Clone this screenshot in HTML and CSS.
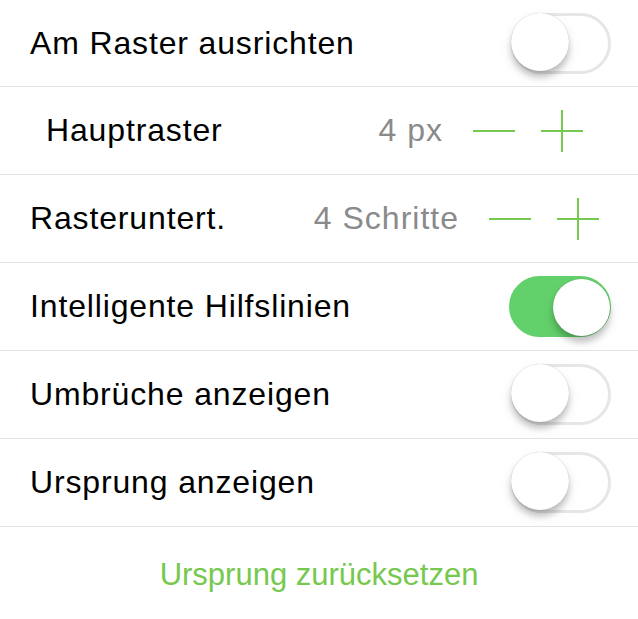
FILE: index.html
```html
<!DOCTYPE html>
<html lang="de">
<head>
<meta charset="utf-8">
<title>Raster</title>
<link rel="stylesheet" href="styles.css">
</head>
<body>
<div class="settings">
  <div class="row row-first">
    <span class="label">Am Raster ausrichten</span>
    <span class="switch"><span class="knob"></span></span>
  </div>
  <div class="row">
    <span class="label label-indent">Hauptraster</span>
    <div class="stepper stepper-wide">
      <span class="value">4 px</span>
      <span class="step minus"></span>
      <span class="step plus"></span>
    </div>
  </div>
  <div class="row">
    <span class="label">Rasteruntert.</span>
    <div class="stepper">
      <span class="value">4 Schritte</span>
      <span class="step minus"></span>
      <span class="step plus"></span>
    </div>
  </div>
  <div class="row">
    <span class="label">Intelligente Hilfslinien</span>
    <span class="switch on"><span class="knob"></span></span>
  </div>
  <div class="row">
    <span class="label">Umbrüche anzeigen</span>
    <span class="switch"><span class="knob"></span></span>
  </div>
  <div class="row">
    <span class="label">Ursprung anzeigen</span>
    <span class="switch"><span class="knob"></span></span>
  </div>
  <div class="action">Ursprung zurücksetzen</div>
</div>
</body>
</html>
```
FILE: styles.css
```css
html, body {
  margin: 0;
  padding: 0;
  background: #ffffff;
}

.settings {
  font-family: "Liberation Sans", Arial, sans-serif;
  font-size: 32px;
  color: #000000;
  display: flex;
  flex-direction: column;
}

.row {
  height: 87px;
  border-bottom: 1px solid #e3e3e3;
  display: flex;
  align-items: center;
  justify-content: space-between;
  padding: 0 27px 0 30px;
}

.row-first {
  height: 86px;
}

.label {
  letter-spacing: 0.85px;
}

.label-indent {
  margin-left: 16px;
}

.switch {
  position: relative;
  box-sizing: border-box;
  width: 100px;
  height: 61px;
  border-radius: 31px;
  border: 3px solid #e6e6e6;
  background: #ffffff;
}

.switch .knob {
  position: absolute;
  top: -3px;
  left: -3px;
  width: 58px;
  height: 58px;
  border-radius: 50%;
  background: #ffffff;
  box-shadow: 0 6px 6px rgba(0, 0, 0, 0.2), 0 0 1px rgba(0, 0, 0, 0.25), 0 6px 14px rgba(0, 0, 0, 0.08);
}

.switch.on {
  background: #63d16b;
  border-color: #63d16b;
  width: 102px;
}

.switch.on .knob {
  left: auto;
  right: -2px;
  top: 0;
  width: 57px;
  height: 57px;
}

.stepper {
  display: flex;
  align-items: center;
  margin-right: 12px;
}

.stepper-wide {
  margin-right: 28px;
}

.value {
  color: #8a8a8a;
  letter-spacing: 1px;
  margin-right: 30px;
}

.step {
  position: relative;
  width: 42px;
  height: 42px;
}

.step + .step {
  margin-left: 26px;
}

.step::before,
.step::after {
  content: "";
  position: absolute;
  background: #76c84e;
}

.step::before {
  left: 0;
  right: 0;
  top: 20px;
  height: 2px;
}

.plus::after {
  top: 0;
  bottom: 0;
  left: 20px;
  width: 2px;
}

.action {
  height: 92px;
  display: flex;
  align-items: center;
  justify-content: center;
  padding-top: 4px;
  box-sizing: border-box;
  font-size: 31px;
  color: #76c84e;
}
```
